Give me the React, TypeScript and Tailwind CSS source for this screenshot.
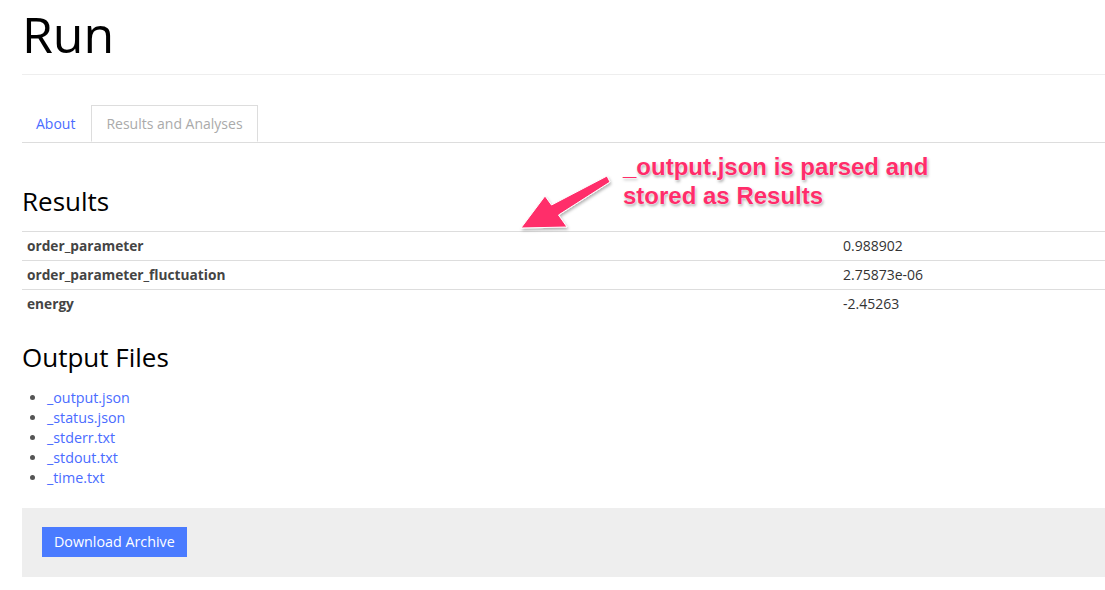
import React from "react";

const results = [
  { key: "order_parameter", value: "0.988902" },
  { key: "order_parameter_fluctuation", value: "2.75873e-06" },
  { key: "energy", value: "-2.45263" },
];

const files = ["_output.json", "_status.json", "_stderr.txt", "_stdout.txt", "_time.txt"];

export default function App() {
  return (
    <div className="relative min-h-screen overflow-hidden bg-white pl-[22px] font-['Open_Sans',sans-serif] text-[#333]">
      {/* Title */}
      <div className="border-b border-[#eee] pt-[3px] pb-[9px]">
        <h1 className="text-[50px] leading-[62px] font-normal text-black">Run</h1>
      </div>

      {/* Tabs */}
      <ul className="mt-[30px] flex border-b border-[#ddd] text-[14px] leading-[20px]">
        <li className="mr-[2px]">
          <a className="block px-[13px] pt-[8px] pb-[7px] border border-transparent text-[#4a6cff]">About</a>
        </li>
        <li className="-mb-px">
          <a className="block px-[14px] pt-[8px] pb-[7px] border border-[#ddd] border-b-white bg-white text-[#aaa]">
            Results and Analyses
          </a>
        </li>
      </ul>

      {/* Results */}
      <h2 className="mt-[44px] text-[26px] leading-[29px] text-black">Results</h2>
      <table className="mt-[15px] w-full leading-[18px]">
        <tbody>
          {results.map((r) => (
            <tr key={r.key} className="border-t border-[#ddd]">
              <td className="w-[813px] px-[5px] py-[5px] text-[13.7px] font-bold text-[#444]">{r.key}</td>
              <td className="px-[8px] py-[5px] text-[14px] text-[#333]">{r.value}</td>
            </tr>
          ))}
        </tbody>
      </table>

      {/* Output files */}
      <h2 className="mt-[25px] text-[26px] leading-[29px] text-black">Output Files</h2>
      <ul className="mt-[16px] list-disc pl-[25px] text-[14.3px] leading-[20px] marker:text-[#555]">
        {files.map((f) => (
          <li key={f}>
            <a className="text-[#4a6cff]">{f}</a>
          </li>
        ))}
      </ul>

      {/* Well */}
      <div className="mt-[20px] bg-[#eee] px-[20px] pt-[19px] pb-[20px]">
        <button className="h-[30px] bg-[#4a7bff] px-[12px] text-[14.3px] text-white">Download Archive</button>
      </div>

      {/* Annotation */}
      <div className="absolute left-[623px] top-[152px] font-['Liberation_Sans',Arial,sans-serif] text-[24px] font-bold leading-[29px] text-[#ff2d6a] [text-shadow:0_0_1px_#fff,0_0_2px_#fff,1px_2px_3px_rgba(0,0,0,0.35)]">
        _output.json is parsed and
        <br />
        stored as Results
      </div>
      <svg className="absolute left-0 top-0" width="1105" height="590" viewBox="0 0 1105 590">
        <defs>
          <filter id="sh" x="-20%" y="-20%" width="140%" height="140%">
            <feDropShadow dx="1" dy="2" stdDeviation="1.5" floodColor="#000" floodOpacity="0.3" />
          </filter>
        </defs>
        <polygon
          points="521,228 545,196 551.5,205 607,176 610,182 558.5,215 567,227"
          fill="#ff2d6a"
          stroke="#fff"
          strokeWidth="1"
          strokeLinejoin="round"
          filter="url(#sh)"
        />
      </svg>
    </div>
  );
}
